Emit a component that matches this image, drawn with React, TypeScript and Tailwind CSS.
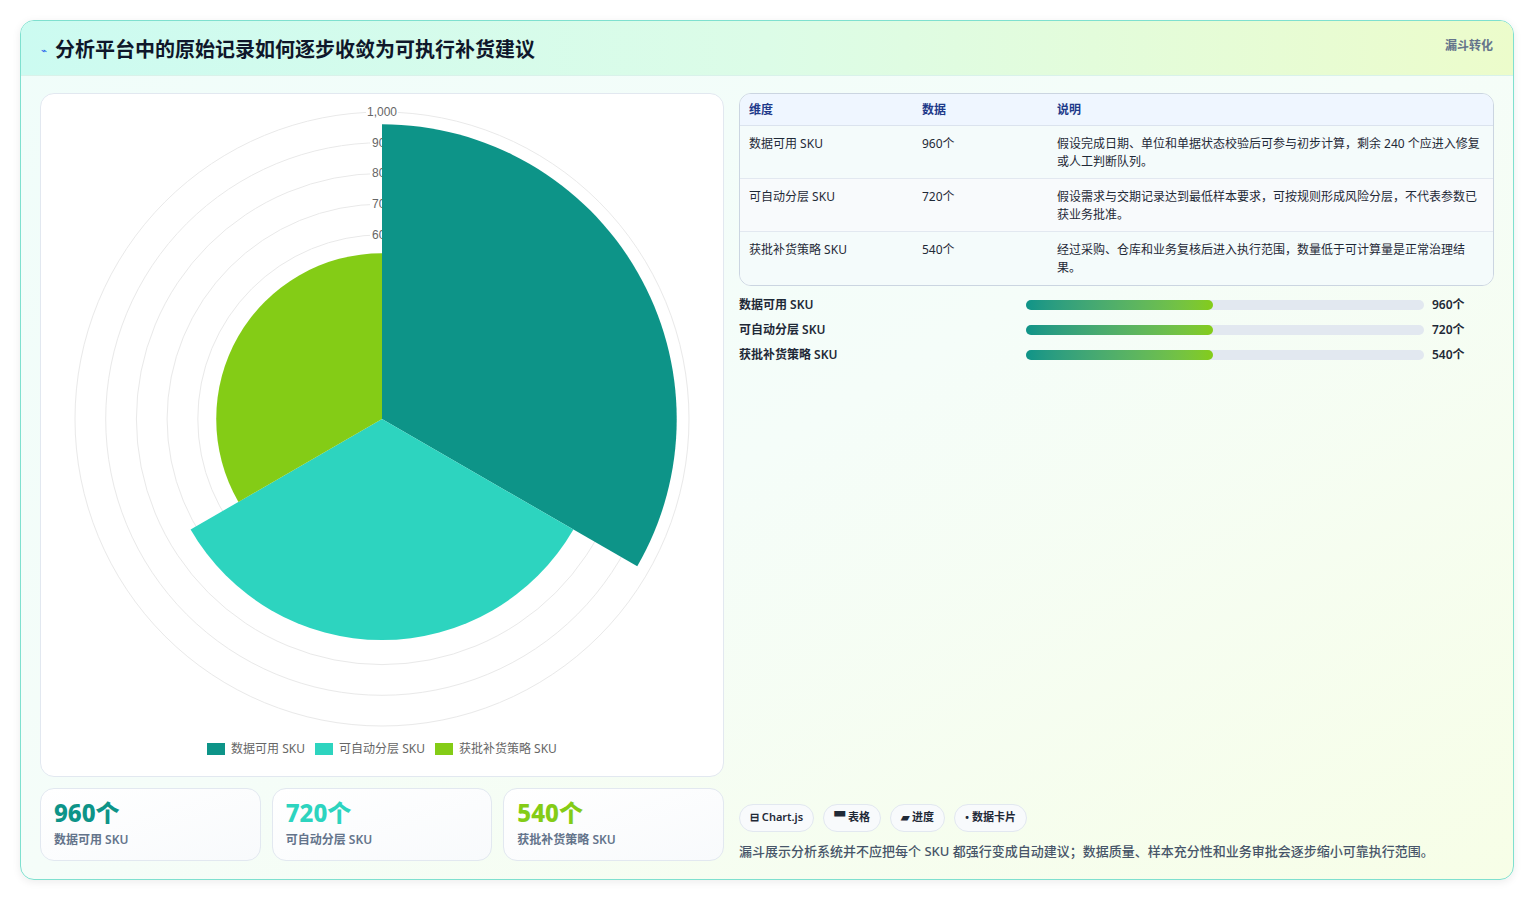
import React from "react";

const cx = 341, cy = 325, k = 0.307;
function arc(v: number, a0: number, a1: number) {
  const r = v * k;
  const p = (a: number) => [cx + r * Math.cos((a * Math.PI) / 180), cy + r * Math.sin((a * Math.PI) / 180)];
  const [x0, y0] = p(a0);
  const [x1, y1] = p(a1);
  return `M${cx},${cy} L${x0},${y0} A${r},${r} 0 0 1 ${x1},${y1} Z`;
}

const rows = [
  ["数据可用 SKU", "960个", "假设完成日期、单位和单据状态校验后可参与初步计算，剩余 240 个应进入修复或人工判断队列。"],
  ["可自动分层 SKU", "720个", "假设需求与交期记录达到最低样本要求，可按规则形成风险分层，不代表参数已获业务批准。"],
  ["获批补货策略 SKU", "540个", "经过采购、仓库和业务复核后进入执行范围，数量低于可计算量是正常治理结果。"],
];

export default function App() {
  const font = { fontFamily: '"Noto Sans","Noto Sans CJK SC",sans-serif' };
  return (
    <div className="w-[1534px] h-[900px] bg-white p-[20px] pb-[20px]" style={font}>
      <div className="h-[860px] rounded-[14px] border border-[#7fe0cf] overflow-hidden flex flex-col bg-gradient-to-br from-[#f0fdfa] via-[#f5fdf9] to-[#f7fee7] shadow-[0_2px_8px_rgba(0,0,0,0.08)]">
        <div className="h-[55px] flex items-start justify-between px-[20px] pt-[15px] bg-gradient-to-r from-[#ccfbf1] via-[#dcfce7] to-[#ecfccb] border-b border-[#d9f2ea]">
          <div className="flex items-center gap-[8px]">
            <span className="text-[10px] text-[#2563eb]">⌁</span>
            <span className="text-[20px] font-bold text-[#0f172a] leading-[28px]">分析平台中的原始记录如何逐步收敛为可执行补货建议</span>
          </div>
          <span className="text-[12px] font-semibold text-[#64748b] mt-[1px]">漏斗转化</span>
        </div>
        <div className="flex-1 flex gap-[15px] px-[19px] pt-[17px] pb-[18px]">
          <div className="w-[684px] flex flex-col gap-[11px]">
            <div className="h-[684px] rounded-[14px] border border-[#e2e8f0] bg-white relative">
              <svg width="684" height="684" className="absolute left-0 top-0">
                {[1000, 900, 800, 700, 600, 500, 400, 300, 200, 100].map((v) => (
                  <circle key={v} cx={cx} cy={cy} r={v * k} fill="none" stroke="#e9e9e9" />
                ))}
                {[1000, 900, 800, 700, 600].map((v) => (
                  <g key={v}>
                    <rect x={v === 1000 ? cx - 16 : cx - 12} y={cy - v * k - 7} width={v === 1000 ? 32 : 24} height={14} fill="white" />
                    <text x={cx} y={cy - v * k + 4} textAnchor="middle" fontSize="12" fill="#666" fontFamily="Liberation Sans, sans-serif">
                      {v === 1000 ? "1,000" : v}
                    </text>
                  </g>
                ))}
                <path d={arc(960, -90, 30)} fill="#0d9488" />
                <path d={arc(720, 30, 150)} fill="#2dd4bf" />
                <path d={arc(540, 150, 270)} fill="#84cc16" />
              </svg>
              <div className="absolute left-0 right-0 top-[646px] flex justify-center gap-[10px] text-[12px] text-[#666]">
                {[["#0d9488", "数据可用 SKU"], ["#2dd4bf", "可自动分层 SKU"], ["#84cc16", "获批补货策略 SKU"]].map(([c, t]) => (
                  <div key={t} className="flex items-center gap-[6px]">
                    <span className="w-[18px] h-[12px]" style={{ background: c }} />
                    <span>{t}</span>
                  </div>
                ))}
              </div>
            </div>
            <div className="flex gap-[11px]">
              {[["960个", "#0d9488", "数据可用 SKU"], ["720个", "#2dd4bf", "可自动分层 SKU"], ["540个", "#84cc16", "获批补货策略 SKU"]].map(([n, c, l]) => (
                <div key={l} className="flex-1 h-[73px] rounded-[14px] border border-[#e2e8f0] bg-gradient-to-br from-white to-[#f8fafc] px-[13px] pt-[9px]">
                  <div className="text-[24px] font-extrabold leading-[30px]" style={{ color: c }}>{n}</div>
                  <div className="text-[12px] font-semibold text-[#64748b] mt-[3px]">{l}</div>
                </div>
              ))}
            </div>
          </div>
          <div className="flex-1 flex flex-col">
            <div className="rounded-[12px] border border-[#cbd5e1] overflow-hidden bg-[#f8fafc]">
              <div className="flex h-[32px] items-center bg-[#eff6ff] border-b border-[#dbe3ee] text-[12px] font-semibold text-[#1e3a8a]">
                <div className="w-[182px] pl-[9px]">维度</div>
                <div className="w-[135px]">数据</div>
                <div className="flex-1">说明</div>
              </div>
              {rows.map((r, i) => (
                <div key={i} className={`flex text-[12px] text-[#1f2937] py-[9px] leading-[18px] h-[53px] ${i < 2 ? "border-b border-[#e2e8f0]" : ""} ${i % 2 ? "bg-[#f8fafc]" : "bg-[#f4fbfb]"}`}>
                  <div className="w-[182px] pl-[9px]">{r[0]}</div>
                  <div className="w-[135px]">{r[1]}</div>
                  <div className="flex-1 pr-[12px]">{r[2]}</div>
                </div>
              ))}
            </div>
            <div className="flex flex-col gap-[7px] mt-[10px] text-[12px] font-semibold text-[#1f2937]">
              {[["数据可用 SKU", "960个"], ["可自动分层 SKU", "720个"], ["获批补货策略 SKU", "540个"]].map(([l, v]) => (
                <div key={l} className="flex items-center h-[18px]">
                  <div className="w-[287px]">{l}</div>
                  <div className="w-[398px] h-[10px] rounded-full bg-[#e2e8f0]">
                    <div className="w-[187px] h-[10px] rounded-full bg-gradient-to-r from-[#0d9488] to-[#84cc16]" />
                  </div>
                  <div className="ml-[8px]">{v}</div>
                </div>
              ))}
            </div>
            <div className="flex-1" />
            <div className="flex gap-[9px] mb-[10px]">
              {["⊟ Chart.js", "▀ 表格", "▰ 进度", "• 数据卡片"].map((t) => (
                <span key={t} className="h-[28px] px-[10px] rounded-full border border-[#e2e8f0] bg-[#f8fafc] text-[11px] font-semibold text-[#1f2937] flex items-center">{t}</span>
              ))}
            </div>
            <div className="text-[13px] text-[#475569] font-medium">漏斗展示分析系统并不应把每个 SKU 都强行变成自动建议；数据质量、样本充分性和业务审批会逐步缩小可靠执行范围。</div>
          </div>
        </div>
      </div>
    </div>
  );
}
